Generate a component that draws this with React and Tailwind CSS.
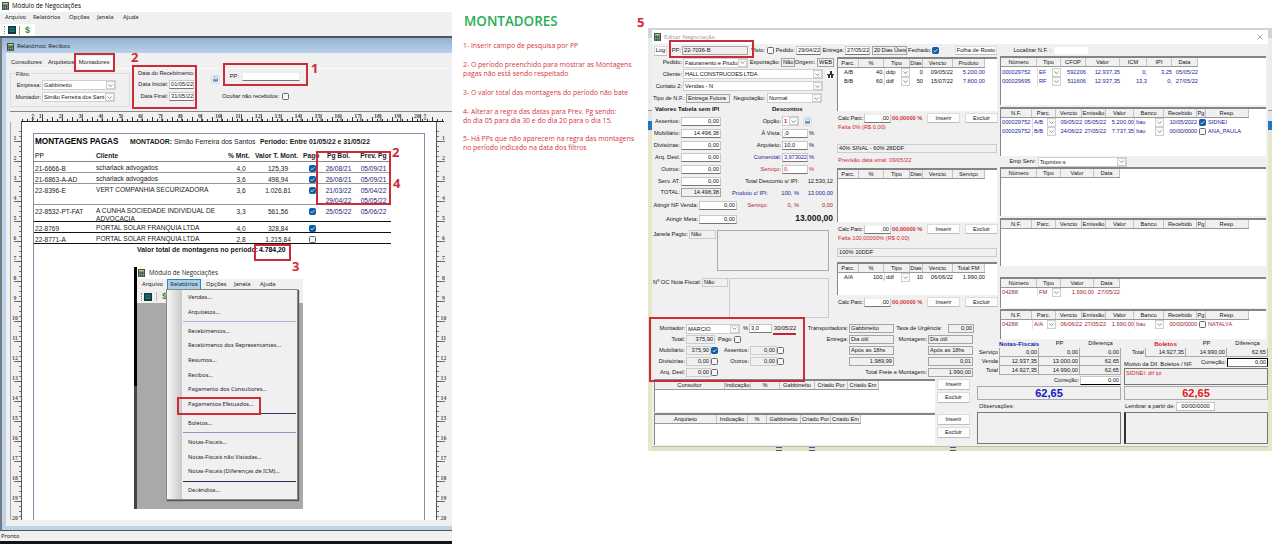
import React from "react";

/* ---------- small shared pieces ---------- */

const L = ({ c = "", children }) => (
  <div className={`flex shrink-0 justify-end whitespace-nowrap pr-px ${c}`}>{children}</div>
);
const T = ({ c = "", children }) => <div className={`shrink-0 whitespace-nowrap ${c}`}>{children}</div>;
const Field = ({ c = "", children }) => (
  <div className={`flex h-[9px] shrink-0 items-center overflow-hidden whitespace-nowrap border border-[#c8c8c8] border-b-[#777] bg-white px-px ${c}`}>
    {children}
  </div>
);
const Flat = ({ c = "", children }) => (
  <div className={`flex h-[9px] shrink-0 items-center overflow-hidden whitespace-nowrap border border-[#a4a4a4] bg-[#f0f0f0] px-px ${c}`}>
    {children}
  </div>
);
const Chevron = () => (
  <div className="flex h-full w-[9px] shrink-0 items-center justify-center border border-[#cfcfcf] bg-[#fafafa]">
    <svg width="5" height="3" viewBox="0 0 5 3" fill="none" stroke="#666" strokeWidth="0.7">
      <path d="M.5 .5 2.5 2.5 4.5 .5" />
    </svg>
  </div>
);
const Select = ({ c = "", children }) => (
  <div className={`flex h-[10px] shrink-0 items-center border border-[#cfcfcf] bg-white pl-px ${c}`}>
    <div className="min-w-0 flex-1 whitespace-nowrap leading-[8px]">{children}</div>
    <Chevron />
  </div>
);
const Check = ({ on, c = "" }) => (
  <div className={`flex h-[7px] w-[7px] shrink-0 items-center justify-center rounded-[1.5px] border ${on ? "border-[#0f5ea8] bg-[#0f5ea8]" : "border-[#666] bg-[#f6f6f6]"} ${c}`}>
    {on && (
      <svg width="5" height="5" viewBox="0 0 5 5" fill="none" stroke="#fff" strokeWidth="0.8">
        <path d="M.7 2.6 2 3.8 4.4 1.2" />
      </svg>
    )}
  </div>
);
const Btn = ({ c = "", children }) => (
  <div className={`flex shrink-0 items-center justify-center whitespace-nowrap rounded-[1px] border border-[#dcdcdc] border-b-[#bdbdbd] bg-[#fdfdfd] ${c}`}>
    {children}
  </div>
);
const AppIcon = ({ c = "" }) => (
  <svg className={`shrink-0 ${c}`} width="7" height="8" viewBox="0 0 7 8">
    <rect width="7" height="8" fill="#3d5540" />
    <rect x="1" y="1" width="5" height="1.6" fill="#a9d08e" />
    <path d="M1 4h5M1 5.5h5M1 7h5" stroke="#b5c4b0" strokeWidth="0.7" strokeDasharray="1.2 .7" />
  </svg>
);
const PrintIcon = () => (
  <svg className="shrink-0" width="9" height="9" viewBox="0 0 9 9">
    <rect x=".5" y=".5" width="8" height="8" rx="1" fill="#eef3f9" stroke="#c3ccd6" strokeWidth=".6" />
    <path d="M3 2h3.5v2.3H3z" fill="#fff" stroke="#6c8fb5" strokeWidth=".6" />
    <path d="M2 4h5v2.6H2z" fill="#7f9fc4" />
    <path d="M2.6 5.8h3.8" stroke="#3b5c86" strokeWidth=".6" />
  </svg>
);
const Monitor = () => (
  <svg width="8" height="8" viewBox="0 0 8 8" className="shrink-0">
    <rect width="8" height="8" fill="#0d3a3d" />
    <rect x="1.5" y="1.5" width="5" height="4.5" fill="#1f7a72" />
    <rect x="2.5" y="2.5" width="3" height="2" fill="#0f4b50" />
  </svg>
);
const Mark = ({ c }) => <div className={`absolute border-2 border-[#cf2b36] ${c}`} />;
const Num = ({ c, children }) => (
  <div className={`absolute font-['Open_Sans'] text-[13px] font-bold leading-[14px] text-[#cf2b36] ${c}`}>{children}</div>
);

/* ---------- left window ---------- */

function HRuler() {
  const ticks = [];
  for (let i = 0; i <= 84; i++) {
    const x = 12 + i * 5;
    const h = i % 4 === 2 ? 4 : 2;
    ticks.push(<path key={i} d={`M${x + 0.5} ${9 - h}V9`} stroke="#333" strokeWidth="1" />);
  }
  return (
    <svg width="442" height="10" viewBox="0 0 442 10" className="block shrink-0">
      <rect width="442" height="10" fill="#f0f0f0" />
      {ticks}
      {Array.from({ length: 20 }, (_, i) => (
        <g key={i}>
          <path d={`M${32.5 + i * 19.9} 2V9`} stroke="#222" strokeWidth="0.8" />
          <text x={31.8 + i * 19.9} y="6" textAnchor="end" fontSize="6" fontWeight="bold" fontFamily="Liberation Serif, serif" fill="#444">
            {i + 1}
          </text>
        </g>
      ))}
      <path d="M23 2v6M21.500 3.500 23 2l1.500 1.500M21.500 6.500 23 8l1.500-1.500M415 2v6M413.500 3.500 415 2l1.500 1.500M413.500 6.500 415 8l1.500-1.500" stroke="#666" strokeWidth=".7" fill="none" />
      <path d="M11 9.500H434" stroke="#222" />
    </svg>
  );
}

function VRuler({ right }) {
  return (
    <svg width="12" height="398" viewBox="0 0 12 398" className="block shrink-0">
      <rect width="12" height="398" fill="#f0f0f0" />
      {Array.from({ length: 80 }, (_, i) => (
        <path
          key={i}
          d={right ? `M1 ${9.5 + i * 5}h${i % 4 === 2 ? 4 : 2}` : `M${i % 4 === 2 ? 7 : 9} ${9.5 + i * 5}H11`}
          stroke="#555"
          strokeWidth="0.8"
        />
      ))}
      {Array.from({ length: 20 }, (_, i) => (
        <g key={i}>
          <text x={right ? 7.5 : 5} y={18.2 + i * 20} textAnchor="middle" fontSize="5.8" fontWeight="bold" fontFamily="Liberation Serif, serif" fill="#555">
            {i + 1}
          </text>
          <path d={right ? `M1 ${19.5 + i * 20}h8` : `M4 ${19.5 + i * 20}H11`} stroke="#555" strokeWidth="0.8" />
        </g>
      ))}
      <path d={right ? "M.5 0V398" : "M11.5 0V398"} stroke="#555" />
      {!right && <path d="M.5 0V398" stroke="#aaa" />}
    </svg>
  );
}

const REP = "grid grid-cols-[61px_132px_26px_48px_20px_33px_37px] w-[357px] pl-px";

function RepRow({ h, line, pp, cli, mnt, val, on, bol, prev }) {
  return (
    <div className={`${REP} ${h} border-b ${line} pt-[2px] leading-[9px]`}>
      <div>{pp}</div>
      <div className="whitespace-pre leading-[8px]">{cli}</div>
      <div className="text-center">{mnt}</div>
      <div className="text-center">{val}</div>
      <div className="flex justify-center pt-px"><Check on={on} /></div>
      <div className="whitespace-pre text-center leading-[9.500px] text-[#1c1c7c]">{bol}</div>
      <div className="whitespace-pre text-center leading-[9.500px] text-[#1c1c7c]">{prev}</div>
    </div>
  );
}

function MenuBar({ active, c }) {
  return (
    <div className={`flex shrink-0 items-center bg-[#f0f0f0] font-['Noto_Sans'] text-[5.800px] text-[#222] ${c}`}>
      <T c="w-[28px]">Arquivo</T>
      {active ? (
        <div className="-ml-[3px] mr-[3px] flex h-full w-[34px] items-center justify-center border border-[#3c7fb1] bg-[#a9d0ea]">Relatórios</div>
      ) : (
        <T c="w-[36px]">Relatórios</T>
      )}
      <T c={active ? "ml-[2px] w-[28px]" : "w-[28px]"}>Opções</T>
      <T c="w-[26px]">Janela</T>
      <T>Ajuda</T>
    </div>
  );
}

const Item = ({ children, c = "" }) => <div className={`flex h-[14.700px] items-center whitespace-nowrap ${c}`}>{children}</div>;
const Sep = ({ c = "bg-[#a3a8d8]" }) => (
  <div className="flex h-[4.300px] items-center">
    <div className={`-ml-[5px] h-px w-[113px] ${c}`} />
  </div>
);

function Embedded() {
  return (
    <div className="ml-[100px] mt-[10px] flex h-[242px] w-[169px]">
      <div className="flex w-[3px] flex-col">
        <div className="h-[119px] bg-black" />
        <div className="flex-1 bg-[#444]" />
      </div>
      <div className="relative flex w-[166px] flex-col bg-[#a9a9a9]">
        <div className="flex h-[12px] items-center bg-white pl-px">
          <AppIcon />
          <T c="ml-[4px] font-['Open_Sans'] text-[6.200px] text-[#222]">Módulo de Negociações</T>
        </div>
        <MenuBar active c="h-[11px] pl-[5px]" />
        <div className="flex h-[13px] items-center bg-[#f0f0f0] pl-[4px]">
          <div className="mr-[2px] h-[8px] border-l border-dotted border-[#888]" />
          <Monitor />
          <div className="ml-[4px] h-[9px] w-px bg-[#bbb]" />
          <T c="ml-[5px] text-[9px] font-bold text-[#2f8f3a]">$</T>
        </div>
        <div className="absolute left-[29px] top-[22px] flex h-[211px] w-[132px] border border-[#888] bg-[#f0f0f0] shadow-[1px_1px_1px_#555]">
          <div className="w-[15px] shrink-0 bg-gradient-to-r from-[#f8f8f8] to-[#c9c9c9]" />
          <div className="flex flex-col pl-[6px] font-['Noto_Sans'] text-[5.620px] text-[#1e1e1e]">
            <Item>Vendas...</Item>
            <Item>Arquitetos...</Item>
            <Sep c="bg-[#a9b5e0]" />
            <Item>Recebimentos...</Item>
            <Item>Recebimento dos Representantes...</Item>
            <Item>Resumos...</Item>
            <Item>Recibos...</Item>
            <Item>Pagamento dos Consultores...</Item>
            <Item>Pagamentos Efetuados...</Item>
            <Sep c="bg-[#34346a]" />
            <Item>Boletos...</Item>
            <Sep c="bg-[#8d93c8]" />
            <Item>Notas-Fiscais...</Item>
            <Item>Notas-Fiscais não Vistadas...</Item>
            <Item>Notas-Fiscais (Diferenças de ICM)...</Item>
            <Sep c="bg-[#2a2a55]" />
            <Item>Decêndios...</Item>
          </div>
        </div>
        <Mark c="left-[40px] top-[130px] h-[18px] w-[84px]" />
      </div>
    </div>
  );
}

function Report() {
  return (
    <div className="relative ml-[11px] mt-[11px] flex h-[388px] w-[392px] flex-col border border-b-0 border-[#8a8aa8] text-[6.600px] text-[#1a1a1a]">
      <div className="flex h-[15px] shrink-0 items-center pl-px pt-px">
        <T c="w-[95px] text-[8.200px] font-bold text-black">MONTAGENS PAGAS</T>
        <T c="w-[130px] text-[6.850px]"><b>MONTADOR:</b> Simão Ferreira dos Santos</T>
        <T c="text-[6.850px] font-bold">Periodo: Entre 01/05/22 e 31/05/22</T>
      </div>
      <div className={`${REP} h-[13px] shrink-0 items-center border-b border-[#888] pt-[3px] text-[6.700px] font-bold`}>
        <div className="font-normal text-black">PP</div>
        <div>Cliente</div>
        <T>% Mnt.</T>
        <T c="pl-px">Valor T. Mont.</T>
        <T c="pl-px">Pago</T>
        <T c="text-center">Pg Bol.</T>
        <T c="text-center">Prev. Pg</T>
      </div>
      <RepRow h="h-[11px]" line="border-[#999]" pp="21-6666-B" cli="scharlack advogados" mnt="4,0" val="125,39" on bol="26/08/21" prev="05/09/21" />
      <RepRow h="h-[11px]" line="border-[#999]" pp="21-6863-A-AD" cli="scharlack advogados" mnt="3,6" val="498,94" on bol="26/08/21" prev="05/09/21" />
      <RepRow h="h-[21px]" line="border-[#999]" pp="22-8396-E" cli="VERT COMPANHIA SECURIZADORA" mnt="3,6" val="1.026,81" on bol={"21/03/22\n29/04/22"} prev={"05/04/22\n05/05/22"} />
      <RepRow h="h-[17px]" line="border-[#111]" pp="22-8532-PT-FAT" cli={"A CUNHA SOCIEDADE INDIVIDUAL DE\nADVOCACIA"} mnt="3,3" val="561,56" on bol="25/05/22" prev="05/06/22" />
      <RepRow h="h-[11px]" line="border-[#111]" pp="22-8769" cli="PORTAL SOLAR FRANQUIA LTDA" mnt="4,0" val="328,84" on />
      <RepRow h="h-[11px]" line="border-[#111]" pp="22-8771-A" cli="PORTAL SOLAR FRANQUIA LTDA" mnt="2,8" val="1.215,84" />
      <div className="flex h-[13px] shrink-0 items-center text-[6.850px] font-bold">
        <L c="w-[225px]">Valor total de montagens no período:</L>
        <T c="text-black">4.784,20</T>
      </div>
      <Embedded />
      <Mark c="left-[282px] top-[17px] h-[54px] w-[75px]" />
      <Mark c="left-[220px] top-[110px] h-[17px] w-[37px]" />
      <Num c="left-[358px] top-[11px]">2</Num>
      <Num c="left-[359px] top-[42px]">4</Num>
      <Num c="left-[258px] top-[125px]">3</Num>
    </div>
  );
}

function LeftWindow() {
  return (
    <div className="relative flex h-[544px] w-[452px] shrink-0 flex-col bg-[#f0f0f0]">
      <div className="flex h-[12px] items-center bg-white pl-[2px]">
        <AppIcon />
        <T c="ml-[3px] font-['Open_Sans'] text-[6.200px] text-black">Módulo de Negociações</T>
      </div>
      <MenuBar c="h-[12px] pb-px pl-[5px]" />
      <div className="flex h-[12px] items-center">
        <div className="flex h-[12px] w-[35px] items-center bg-white pl-[4px]">
          <div className="mr-[3px] h-[8px] border-l border-dotted border-[#888]" />
          <Monitor />
          <div className="ml-[3px] h-[9px] w-px bg-[#999]" />
          <T c="ml-[5px] text-[9px] font-bold text-[#2f8f3a]">$</T>
        </div>
      </div>
      <div className="h-[2px] bg-[#4f5660]" />
      <div className="flex h-[492px] border-l-2 border-[#777b80]">
        <div className="flex w-[450px] flex-col">
          <div className="flex h-[15px] shrink-0 items-center bg-gradient-to-b from-[#94b1d4] to-[#b9d1ea] pl-[5px] pt-[2px]">
            <AppIcon />
            <T c="ml-[3px] font-['Open_Sans'] text-[6px] text-[#111]">Relatórios: Recibos</T>
          </div>
          <div className="flex flex-1 border-b-[4px] border-l-[4px] border-[#bcd3ea] pl-[4px]">
            <div className="flex w-[442px] flex-col text-[5.700px] text-[#1a1a1a]">
              <div className="flex h-[16px] items-center border-b border-[#fafafa] pt-[3px] text-[5.800px]">
                <T c="w-[38px] pl-px">Consultores</T>
                <T c="w-[26px]">Arquitetos</T>
                <div className="flex h-[13px] w-[40px] items-center justify-center bg-[#fbfbfb]">Montadores</div>
              </div>
              <div className="flex h-[42px]">
                <fieldset className="mt-[4px] h-[34px] w-[120px] border border-[#dcdcdc]">
                  <div className="-mt-[4px] ml-[5px] h-[8px] w-[16px] bg-[#f0f0f0] leading-[8px]">Filtro:</div>
                  <div className="mt-[1px] flex h-[12px] items-center">
                    <L c="w-[31px]">Empresa:</L>
                    <Select c="w-[74px]">Gabbinetto</Select>
                  </div>
                  <div className="flex h-[12px] items-center">
                    <L c="w-[31px]">Montador:</L>
                    <Select c="w-[73px] tracking-[-0.06px]">Simão Ferreira dos Sant</Select>
                  </div>
                </fieldset>
                <div className="ml-[5px] flex w-[62px] flex-col pt-[1px]">
                  <T c="pl-[3px] leading-[7px]">Data do Recebimento:</T>
                  <div className="mt-[1px] flex h-[12px] items-center">
                    <L c="w-[34px]">Data Inicial:</L>
                    <Field c="w-[25px]">01/05/22</Field>
                  </div>
                  <div className="flex h-[12px] items-center">
                    <L c="w-[34px]">Data Final:</L>
                    <Field c="w-[25px] border-b-[#1a6fc0]">31/05/22</Field>
                  </div>
                </div>
                <div className="ml-[14px] pt-[6px]"><PrintIcon /></div>
                <div className="ml-[2px] flex flex-col pt-[1px]">
                  <div className="flex h-[13px] items-center">
                    <L c="w-[18px]">PP:</L>
                    <Field c="ml-[2px] w-[58px] border-[#eee] border-b-[#555]" />
                  </div>
                  <div className="mt-[7px] flex h-[12px] items-center">
                    <T c="w-[60px]">Ocultar não recebidos:</T>
                    <Check />
                  </div>
                </div>
              </div>
              <div className="flex h-[409px] flex-col border-t border-[#888]">
                <HRuler />
                <div className="flex h-[398px]">
                  <VRuler />
                  <div className="w-[414px] overflow-hidden bg-white"><Report /></div>
                  <VRuler right />
                </div>
              </div>
            </div>
          </div>
        </div>
      </div>
      <div className="h-px bg-[#555]" />
      <div className="flex h-[10px] items-center pl-px font-['Noto_Sans'] text-[5.800px] text-[#222]">Pronto</div>
      <div className="h-[3px] bg-[#141414]" />
      <Mark c="left-[74px] top-[53px] h-[19px] w-[41px]" />
      <Mark c="left-[132px] top-[65px] h-[44px] w-[65px]" />
      <Mark c="left-[223px] top-[63px] h-[23px] w-[85px]" />
      <Num c="left-[131px] top-[50px]">2</Num>
      <Num c="left-[311px] top-[61px]">1</Num>
    </div>
  );
}

/* ---------- notes ---------- */

function Notes() {
  return (
    <div className="flex w-[196px] shrink-0 flex-col pl-[11px] pt-[12px] font-['Open_Sans'] text-[6.860px] leading-[9px] text-[#d8343c]">
      <div className="h-[29px] pl-px text-[13.400px] font-semibold leading-[18px] text-[#27ae55]">MONTADORES</div>
      <T>1- Inserir campo de pesquisa por PP</T>
      <T c="mt-[10px]">2- O período preenchido para mostrar as Montagens</T>
      <T>pagas não está sendo respeitado</T>
      <T c="mt-[10px]">3- O valor total das montagens do período não bate</T>
      <T c="mt-[10px]">4- Alterar a regra das datas para Prev. Pg sendo:</T>
      <T>do dia 05 para dia 30 e do dia 20 para o dia 15.</T>
      <T c="mt-[9px]">5- Há PPs que não aparecem na regra das montagens</T>
      <T>no período indicado na data dos filtros</T>
    </div>
  );
}

/* ---------- dialog tables ---------- */

const B_COLS = "grid grid-cols-[21px_25px_26px_13px_30px_32px] w-[147px]";
const C_DOC = "grid grid-cols-[36px_24px_25px_34px_27px_25px_26px] w-[197px]";
const C_NF = "grid grid-cols-[31px_24px_26px_24px_28px_30px_33px_9px_43px] w-[248px]";
const C_SERV = "grid grid-cols-[36px_24px_33px_26px] w-[119px]";
const L_CONS = "grid grid-cols-[70px_26px_29px_35px_33px_31px] w-[224px]";
const L_ARQ = "grid grid-cols-[62px_31px_19px_34px_30px_30px] w-[206px]";

const Head = ({ cols, names }) => (
  <div className={`${cols} h-[9px] shrink-0 border-b border-[#999] bg-[#f0f0f0]`}>
    {names.map((n, i) => (
      <div key={i} className="flex items-center justify-center whitespace-nowrap border-r border-[#c4c4c4]">{n}</div>
    ))}
  </div>
);
const Table = ({ c, cols, names, children }) => (
  <div className={`flex shrink-0 flex-col overflow-hidden border-l border-t-2 border-[#858585] bg-white ${c}`}>
    <Head cols={cols} names={names} />
    {children}
  </div>
);
const Row = ({ cols, c = "", children }) => <div className={`${cols} h-[9px] shrink-0 items-center ${c}`}>{children}</div>;
const R = ({ children, c = "" }) => <div className={`whitespace-nowrap text-right ${c}`}>{children}</div>;
const Mini = ({ children }) => (
  <div className="flex h-[9px] items-center justify-between border-l border-[#ddd] pl-px">
    <span>{children}</span>
    <Chevron />
  </div>
);

const CalcRow = () => (
  <div className="flex h-[10px] shrink-0 items-center">
    <T c="w-[27px] pl-px tracking-[-0.1px]">Calc Parc:</T>
    <Field c="w-[27px] justify-end border-t-[#eee]">,00</Field>
    <T c="ml-px w-[35px] font-bold text-[#cf3b41]">00,00000 %</T>
    <Btn c="h-[10px] w-[33px]">Inserir</Btn>
    <Btn c="ml-[5px] h-[10px] w-[33px]">Excluir</Btn>
  </div>
);

function ColumnB() {
  return (
    <div className="flex w-[162px] flex-col pl-px">
      <Table c="h-[54px] w-[160px]" cols={B_COLS} names={["Parc.", "%", "Tipo", "Dias", "Vencto", "Produto"]}>
        <Row cols={B_COLS}>
          <div className="text-center">A/B</div><R>40,</R><Mini>ddp</Mini><R>0</R><R>09/05/22</R><R c="text-[#23239b]">5.200,00</R>
        </Row>
        <Row cols={B_COLS}>
          <div className="text-center">B/B</div><R>60,</R><Mini>ddf</Mini><R>50</R><R>15/07/22</R><R c="text-[#23239b]">7.800,00</R>
        </Row>
      </Table>
      <div className="mt-[2px]"><CalcRow /></div>
      <T c="h-[10px] pl-px pt-px text-[#d3272e]">Falta 0% (R$ 0,00)</T>
      <Flat c="mt-[11px] w-[160px] border-[#ccc]">40% SINAL - 60% 28DDF</Flat>
      <T c="h-[15px] pl-px pt-[4px] text-[#d3272e]">Previsão data sinal: 09/05/22</T>
      <Table c="h-[54px] w-[160px]" cols={B_COLS} names={["Parc.", "%", "Tipo", "Dias", "Vencto", "Serviço"]} />
      <div className="mt-[2px]"><CalcRow /></div>
      <T c="h-[10px] pl-px pt-px text-[#d3272e]">Falta 100,00000% (R$ 0,00)</T>
      <Flat c="mt-[4px] w-[160px] border-[#ccc]">100% 10DDF</Flat>
      <Table c="mt-[5px] h-[33px] w-[160px]" cols={B_COLS} names={["Parc.", "%", "Tipo", "Dias", "Vencto", "Total FM"]}>
        <Row cols={B_COLS}>
          <div className="text-center">A/A</div><R>100,</R><Mini>ddf</Mini><R>10</R><R>06/06/22</R><R>1.990,00</R>
        </Row>
      </Table>
      <div className="mt-[2px]"><CalcRow /></div>
    </div>
  );
}

const Pct = ({ label, value, c = "", fc = "" }) => (
  <div className={`flex h-[12px] items-center ${c}`}>
    <L c="w-[61px]">{label}</L>
    <Field c={`w-[26px] ${fc}`}>{value}</Field>
    <T c="ml-px">%</T>
  </div>
);

function ColumnA() {
  return (
    <div className="flex w-[184px] flex-col">
      <div className="flex h-[11px] items-center">
        <L c="w-[31px]">Pedido:</L>
        <Select c="w-[65px] tracking-[-0.08px]">Faturamento e Produ</Select>
        <L c="w-[33px]">Exportação:</L>
        <Flat c="w-[14px]">Não</Flat>
        <L c="w-[21px]">Origem:</L>
        <Flat c="ml-px w-[17px] justify-center">WEB</Flat>
      </div>
      <div className="flex h-[12px] items-center">
        <L c="w-[31px]">Cliente:</L>
        <Select c="w-[140px] tracking-[-0.15px]">HALL CONSTRUCOES LTDA</Select>
        <svg className="ml-[3px]" width="9" height="9" viewBox="0 0 9 9">
          <rect width="9" height="9" fill="#fafafa" />
          <path d="M1 4h7v1H1zM2 5h2v3H2zM5 5h2v3H5zM4 1h2v3H4z" fill="#333" />
        </svg>
      </div>
      <div className="flex h-[12px] items-center">
        <L c="w-[31px]">Contato 2:</L>
        <Select c="w-[140px]">Vendas - N</Select>
      </div>
      <div className="flex h-[12px] items-center">
        <L c="w-[34px]">Tipo de N.F.:</L>
        <Flat c="w-[44px]">Entrega Futura</Flat>
        <L c="w-[36px]">Negociação:</L>
        <Select c="ml-px w-[55px]">Normal</Select>
      </div>
      <div className="flex h-[11px] items-center text-[6px] font-bold">
        <T c="w-[120px] pl-[3px]">Valores Tabela sem IPI</T>
        <T>Descontos</T>
      </div>
      <div className="flex h-[113px]">
        <div className="flex w-[69px] flex-col">
          {[
            ["Assentos:", "0,00"],
            ["Mobiliário:", "14.498,38"],
            ["Divisórias:", "0,00"],
            ["Arq. Desl.", "0,00"],
            ["Outros:", "0,00"],
            ["Serv. AT.", "0,00"],
          ].map(([a, b]) => (
            <div key={a} className="flex h-[12px] items-center">
              <L c="w-[29px]">{a}</L>
              <Field c="w-[40px] justify-end">{b}</Field>
            </div>
          ))}
          <div className="flex h-[11px] items-center">
            <L c="w-[29px]">TOTAL:</L>
            <Flat c="w-[40px] justify-end">14.498,38</Flat>
          </div>
          <div className="flex h-[15px] items-center">
            <L c="w-[47px]">Atingir NF Venda:</L>
            <Field c="w-[38px] justify-end">0,00</Field>
          </div>
          <div className="flex h-[12px] items-center">
            <L c="w-[47px]">Atingir Meta:</L>
            <Field c="w-[38px] justify-end">0,00</Field>
          </div>
        </div>
        <div className="flex w-[115px] flex-col">
          <div className="flex h-[12px] items-center">
            <L c="w-[61px]">Opção:</L>
            <Select c="w-[17px] font-bold text-[#b01c24]">1</Select>
            <div className="ml-[4px]"><PrintIcon /></div>
          </div>
          <Pct label="À Vista:" value=",0" />
          <Pct label="Arquiteto:" value="10,0" />
          <Pct label="Comercial:" value="3,973022" c="text-[#23239b]" fc="tracking-[-0.1px]" />
          <Pct label="Serviço:" value="0," c="text-[#c22a30]" />
          <div className="flex h-[12px] items-center">
            <L c="w-[79px]">Total Desconto s/ IPI:</L>
            <L c="w-[34px]">12.530,12</L>
          </div>
          <div className="flex h-[12px] items-center text-[#23239b]">
            <L c="w-[48px]">Produto c/ IPI:</L>
            <L c="w-[31px]">100, %</L>
            <L c="w-[34px]">13.000,00</L>
          </div>
          <div className="flex h-[12px] items-center text-[#b01c24]">
            <L c="w-[48px]">Serviço:</L>
            <L c="w-[31px]">0, %</L>
            <L c="w-[34px]">0,00</L>
          </div>
          <div className="flex h-[15px] items-center text-[8.500px] font-bold">
            <L c="w-[113px]">13.000,00</L>
          </div>
        </div>
      </div>
      <div className="flex h-[49px] pt-[2px]">
        <L c="w-[37px] pt-px">Janela Pagto:</L>
        <Flat c="w-[27px] border-[#ccc]">Não</Flat>
        <div className="ml-px h-[41px] w-[112px] border border-[#aaa] pl-px leading-[8px]">.</div>
      </div>
      <div className="flex h-[42px] pt-px">
        <L c="w-[50px] pt-px">Nº OC Nota Fiscal:</L>
        <Flat c="w-[26px] border-[#ccc]">Não</Flat>
        <div className="ml-px h-[40px] w-[100px] border border-[#ccc]" />
      </div>
    </div>
  );
}

function Assembler() {
  return (
    <div className="flex h-[56px] flex-col">
      <div className="flex h-[11px] items-center">
        <L c="w-[34px]">Montador:</L>
        <Select c="w-[54px]">MARCIO</Select>
        <T c="ml-[3px] w-[6px]">%</T>
        <Field c="w-[23px]">3,0</Field>
        <T c="ml-[2px] w-[23px]">30/05/22</T>
        <L c="w-[52px]">Transportadora:</L>
        <Flat c="w-[45px]">Gabbinetto</Flat>
        <L c="w-[49px]">Taxa de Urgência:</L>
        <Flat c="ml-[5px] w-[26px] justify-end">0,00</Flat>
      </div>
      <div className="flex h-[11px] items-center">
        <L c="w-[34px]">Total:</L>
        <Flat c="w-[29px] justify-end border-[#ccc]">375,90</Flat>
        <T c="ml-[3px] w-[16px]">Pago:</T>
        <Check />
        <L c="w-[108px]">Entrega:</L>
        <Flat c="w-[45px]">Dia útil</Flat>
        <L c="w-[34px]">Montagem:</L>
        <Flat c="w-[45px]">Dia útil</Flat>
      </div>
      <div className="flex h-[11px] items-center">
        <L c="w-[34px]">Mobiliário:</L>
        <Flat c="w-[25px] justify-end border-[#ccc]">375,90</Flat>
        <Check on />
        <L c="w-[32px]">Assentos:</L>
        <Flat c="w-[27px] justify-end border-[#ccc]">0,00</Flat>
        <Check />
        <Flat c="ml-[65px] w-[45px]">Após as 18hs</Flat>
        <Flat c="ml-[34px] w-[45px]">Após as 18hs</Flat>
      </div>
      <div className="flex h-[11px] items-center">
        <L c="w-[34px]">Divisórias:</L>
        <Flat c="w-[25px] justify-end border-[#ccc]">0,00</Flat>
        <Check />
        <L c="w-[32px]">Outros:</L>
        <Flat c="w-[27px] justify-end border-[#ccc]">0,00</Flat>
        <Check />
        <Flat c="ml-[65px] w-[45px] justify-end">1.989,99</Flat>
        <Flat c="ml-[34px] w-[45px] justify-end">0,01</Flat>
      </div>
      <div className="flex h-[11px] items-center">
        <L c="w-[34px]">Arq. Desl:</L>
        <Flat c="w-[25px] justify-end border-[#ccc]">0,00</Flat>
        <Check />
        <L c="w-[210px]">Total Frete e Montagem:</L>
        <Flat c="w-[45px] justify-end">1.990,00</Flat>
      </div>
    </div>
  );
}

function LeftHalf() {
  return (
    <div className="flex w-[346px] flex-col">
      <div className="flex h-[13px] items-center pl-[2px]">
        <Btn c="h-[10px] w-[13px]">Log</Btn>
        <L c="w-[15px]">PP:</L>
        <Flat c="w-[66px]">22-7036-B</Flat>
        <L c="w-[18px]">Visto:</L>
        <Check c="ml-px" />
        <L c="w-[22px]">Pedido:</L>
        <Field c="w-[25px]">29/04/22</Field>
        <L c="w-[24px]">Entrega:</L>
        <Field c="w-[25px]">27/05/22</Field>
        <Flat c="ml-[2px] w-[35px] tracking-[-0.1px]">20 Dias Úteis</Flat>
        <L c="w-[25px] tracking-[-0.1px]">Fechado:</L>
        <Check on />
        <Btn c="ml-[16px] h-[9px] w-[42px]">Folha de Rosto</Btn>
      </div>
      <div className="flex h-[266px]">
        <ColumnA />
        <ColumnB />
      </div>
      <Assembler />
      <div className="flex h-[34px] pl-[2px]">
        <Table c="h-[33px] w-[281px]" cols={L_CONS} names={["Consultor", "Indicação", "%", "Gabbinetto", "Criado Por", "Criado Em"]} />
        <div className="ml-[2px] flex flex-col gap-[2px]">
          <Btn c="h-[11px] w-[33px]">Inserir</Btn>
          <Btn c="h-[11px] w-[33px]">Excluir</Btn>
        </div>
      </div>
      <div className="flex h-[32px] pl-[2px]">
        <Table c="h-[32px] w-[281px]" cols={L_ARQ} names={["Arquiteto", "Indicação", "%", "Gabbinetto", "Criado Por", "Criado Em"]} />
        <div className="ml-[2px] flex flex-col gap-[2px] pt-px">
          <Btn c="h-[11px] w-[33px]">Inserir</Btn>
          <Btn c="h-[11px] w-[33px]">Excluir</Btn>
        </div>
      </div>
    </div>
  );
}

const NF_NAMES = ["N.F.", "Parc.", "Vencto", "Emissão", "Valor", "Banco", "Recebido", "Pg", "Resp."];
const NfRow = ({ d, on, c }) => (
  <Row cols={C_NF} c={c}>
    <T c="pl-px">{d[0]}</T><Mini>{d[1]}</Mini><R c="tracking-[-0.08px]">{d[2]}</R><R c="tracking-[-0.08px]">{d[3]}</R><R>{d[4]}</R><Mini>{d[5]}</Mini><R c="tracking-[-0.1px]">{d[6]}</R>
    <div className="flex justify-center pl-px"><Check on={on} /></div><T c="pl-[2px]">{d[7]}</T>
  </Row>
);
const N = ({ c = "", children }) => (
  <div className={`flex h-[9px] items-center justify-end border-b border-r border-[#aaa] bg-[#f0f0f0] pr-px ${c}`}>{children}</div>
);

function Totals() {
  return (
    <div className="-ml-[22px] flex h-[106px] w-[292px] gap-[3px] pl-px">
      <div className="flex w-[144px] flex-col">
        <div className="grid h-[9px] grid-cols-[22px_40px_41px_41px] items-center text-center">
          <div />
          <T c="text-[6.200px] font-bold text-[#1b1bb5]">Notas-Fiscais</T><T>PP</T><T>Diferença</T>
        </div>
        {[
          ["Serviço", "0,00", "0,00", "0,00"],
          ["Venda", "12.937,35", "13.000,00", "62,65"],
          ["Total", "14.927,35", "14.990,00", "62,65"],
        ].map((r, i) => (
          <div key={i} className="grid h-[9px] grid-cols-[22px_40px_41px_41px] items-center">
            <L>{r[0]}</L>
            <N c="border-l">{r[1]}</N><N>{r[2]}</N><N>{r[3]}</N>
          </div>
        ))}
        <div className="flex h-[11px] items-center">
          <L c="w-[103px]">Correção:</L>
          <Field c="w-[41px] justify-end border-b-black">0,00</Field>
        </div>
        <div className="flex h-[14px] items-center justify-center border border-[#aaa] text-[11px] font-bold text-[#1414c4]">62,65</div>
        <div className="flex h-[12px] items-center pl-[2px]">Observações:</div>
        <div className="h-[32px] border border-[#777] pl-px leading-[8px]" />
      </div>
      <div className="flex w-[144px] flex-col">
        <div className="grid h-[9px] grid-cols-[21px_41px_41px_41px] items-center text-center">
          <div />
          <T c="text-[6.200px] font-bold text-[#d01c24]">Boletos</T><T>PP</T><T>Diferença</T>
        </div>
        <div className="grid h-[9px] grid-cols-[21px_41px_41px_41px] items-center">
          <L>Total</L>
          <N c="border-l">14.927,35</N><N>14.990,00</N><N>62,65</N>
        </div>
        <div className="flex h-[11px] items-center">
          <T c="w-[68px] pt-[4px]">Motivo da Dif. Boletos / NF.</T>
          <L c="w-[35px]">Correção:</L>
          <Field c="w-[41px] justify-end border-black">0,00</Field>
        </div>
        <div className="h-[17px] border border-[#777] pl-px leading-[8px] text-[#d01c24]">SIDNEI: dif ipi</div>
        <div className="mt-[1px] flex h-[14px] items-center justify-center border border-[#aaa] text-[11px] font-bold text-[#e01c24]">62,65</div>
        <div className="flex h-[12px] items-center">
          <T c="w-[52px] pl-px">Lembrar a partir de:</T>
          <Field c="w-[39px] justify-center border-b-[#bbb]">00/00/0000</Field>
        </div>
        <div className="h-[32px] border border-l-2 border-[#777] border-l-[#333]" />
      </div>
    </div>
  );
}

function RightHalf() {
  return (
    <div className="flex w-[270px] flex-col pl-[2px]">
      <div className="flex h-[12px] items-center">
        <L c="w-[52px]">Localizar N.F. :</L>
        <Field c="ml-px w-[36px] border-[#eee] border-b-[#eee]" />
      </div>
      <Table c="h-[49px] w-[266px]" cols={C_DOC} names={["Número", "Tipo", "CFOP", "Valor", "ICM", "IPI", "Data"]}>
        <Row cols={C_DOC} c="mt-[1px] text-[#23239b]">
          <T c="pl-px">000029752</T><Mini>EF</Mini><R>592206</R><R>12.937,35</R><R>0,</R><R>3,25</R><R>05/05/22</R>
        </Row>
        <Row cols={C_DOC} c="text-[#23239b]">
          <T c="pl-px">000029695</T><Mini>RF</Mini><R>511606</R><R>12.937,35</R><R>13,3</R><R>0,</R><R>27/05/22</R>
        </Row>
      </Table>
      <Table c="mt-[2px] h-[49px] w-[266px]" cols={C_NF} names={NF_NAMES}>
        <NfRow on c="text-[#23239b]" d={["000029752", "A/B", "09/05/22", "05/05/22", "5.200,00", "Itau", "10/05/2022", "SIDNEI"]} />
        <NfRow c="text-[#23239b]" d={["000029752", "B/B", "24/06/22", "27/05/22", "7.737,35", "Itau", "00/00/0000", "ANA_PAULA"]} />
      </Table>
      <div className="flex h-[11px] shrink-0 items-center">
        <L c="w-[37px]">Emp Serv:</L>
        <Select c="ml-px w-[89px]">Topmixx-s</Select>
      </div>
      <Table c="h-[49px] w-[266px]" cols={C_SERV} names={["Número", "Tipo", "Valor", "Data"]} />
      <Table c="mt-[2px] h-[48px] w-[266px]" cols={C_NF} names={NF_NAMES} />
      <Table c="mt-[11px] h-[31px] w-[266px]" cols={C_SERV} names={["Número", "Tipo", "Valor", "Data"]}>
        <Row cols={C_SERV} c="text-[#a02430]">
          <T c="pl-px">04288</T><Mini>FM</Mini><R>1.990,00</R><R>27/05/22</R>
        </Row>
      </Table>
      <Table c="mt-[1px] h-[30px] w-[266px]" cols={C_NF} names={NF_NAMES}>
        <NfRow c="text-[#a02430]" d={["04288", "A/A", "06/06/22", "27/05/22", "1.990,00", "Itau", "00/00/0000", "NATALYA"]} />
      </Table>
      <div className="-ml-[2px]"><Totals /></div>
    </div>
  );
}

const Edge = ({ c }) => (
  <div className={`flex shrink-0 flex-col ${c}`}>
    <div className="h-[10px] bg-[#cdd5dd]" />
    <div className="h-[72px] bg-[#e9edf0]" />
    <div className="h-px bg-[#c98080]" />
    <div className="h-[10px] bg-[#dfe5ea]" />
    <div className="h-[9px] bg-[#1d77c2]" />
    <div className="flex-1 bg-[#e6e6cb]" />
  </div>
);

const Bars = ({ c }) => (
  <div className={`h-[4px] w-[6px] shrink-0 border-y border-[#2b62a0] ${c}`} />
);

function Dialog() {
  return (
    <div className="relative mt-[28px] flex h-[423px] w-[624px] shrink-0">
      <Edge c="w-[4px]" />
      <div className="flex w-[616px] flex-col">
        <div className="h-[2px] bg-[#cfd5dd]" />
        <div className="flex h-[14px] items-center bg-white pl-[2px]">
          <AppIcon />
          <T c="ml-[3px] font-['Open_Sans'] text-[6.100px] text-[#999]">Editar Negociação</T>
          <svg className="ml-auto mr-[5px]" width="6" height="6" viewBox="0 0 6 6" stroke="#888" strokeWidth=".7">
            <path d="M.5 .5 5.500 5.500M5.500 .5 .5 5.500" />
          </svg>
        </div>
        <div className="flex h-[402px] bg-[#f0f0f0] text-[5.700px] leading-[7px] text-[#141414]">
          <LeftHalf />
          <RightHalf />
        </div>
        <div className="flex h-[5px] items-end border-t border-[#bdbda8] bg-[#e2e2c8]">
          <Bars c="ml-[124px]" />
          <Bars c="ml-[27px]" />
          <Bars c="ml-[135px]" />
        </div>
      </div>
      <Edge c="w-[4px]" />
      <Mark c="left-[21px] top-[12px] h-[18px] w-[85px]" />
      <Mark c="left-px top-[289px] h-[65px] w-[156px]" />
      <div className="absolute left-[125px] top-[305px] h-[2px] w-[23px] bg-[#c8202c]" />
      <Num c="-left-[11px] -top-[13px]">5</Num>
    </div>
  );
}

export default function App() {
  return (
    <div className="flex h-[544px] w-[1280px] overflow-hidden bg-white font-['Liberation_Sans',Arial,sans-serif] leading-[1.2]">
      <LeftWindow />
      <Notes />
      <Dialog />
    </div>
  );
}
